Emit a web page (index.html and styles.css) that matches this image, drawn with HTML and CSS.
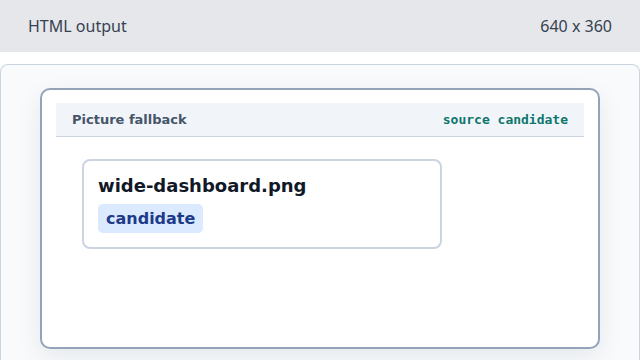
FILE: index.html
```html
<!DOCTYPE html>
<html>
<head>
<meta charset="utf-8">
<link rel="stylesheet" href="styles.css">
</head>
<body>
<div class="topbar">
  <span>HTML output</span>
  <span>640 x 360</span>
</div>
<div class="stage">
  <div class="frame">
    <div class="frame-head">
      <span class="title">Picture fallback</span>
      <span class="code">source candidate</span>
    </div>
    <div class="frame-body">
      <div class="item">
        <div class="name">wide-dashboard.png</div>
        <span class="badge">candidate</span>
      </div>
    </div>
  </div>
</div>
</body>
</html>
```
FILE: styles.css
```css
* { box-sizing: border-box; }
html, body { margin: 0; padding: 0; background: #ffffff; width: 640px; height: 360px; overflow: hidden; }
body { font-family: "DejaVu Sans", sans-serif; }
.topbar {
  height: 52px;
  background: #e5e7eb;
  display: flex;
  justify-content: space-between;
  align-items: center;
  padding: 0 28px;
  font-family: "Noto Sans", sans-serif;
  font-size: 16px;
  color: #374151;
}
.stage {
  margin-top: 12px;
  border: 1px solid #cbd5e1;
  border-bottom: 0;
  border-radius: 8px 8px 0 0;
  background: #f8fafc;
  padding: 23px 39px 0;
  height: 296px;
}
.frame {
  background: #ffffff;
  border: 2px solid #94a3b8;
  border-radius: 10px;
  padding: 13px 14px;
  height: 261px;
  box-shadow: 0 8px 24px rgba(15, 23, 42, 0.08);
}
.frame-head {
  background: #f1f5f9;
  border-bottom: 1px solid #cbd5e1;
  height: 34px;
  display: flex;
  justify-content: space-between;
  align-items: center;
  padding: 0 16px;
}
.title { font-weight: bold; font-size: 13px; color: #475569; }
.code { font-family: "DejaVu Sans Mono", monospace; font-weight: bold; font-size: 13px; color: #0f766e; }
.frame-body { padding: 22px 26px; }
.item {
  width: 360px;
  height: 90px;
  border: 2px solid #cbd5e1;
  border-radius: 8px;
  padding: 13px 14px;
}
.name { font-weight: bold; font-size: 18px; color: #111827; line-height: 24px; }
.badge {
  display: inline-block;
  margin-top: 6px;
  background: #dbeafe;
  color: #1e3a8a;
  font-weight: bold;
  font-size: 16px;
  line-height: 29px;
  padding: 0 8px;
  border-radius: 5px;
}
```
